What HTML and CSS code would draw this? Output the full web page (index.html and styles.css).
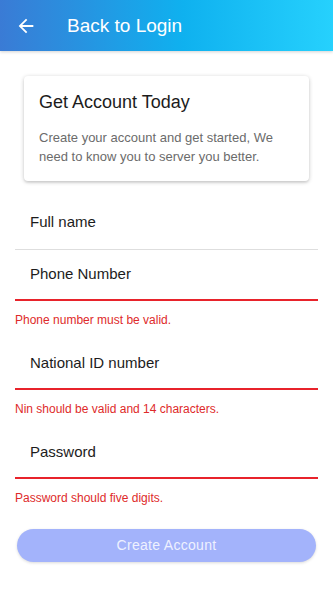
FILE: index.html
```html
<!DOCTYPE html>
<html lang="en">
<head>
<meta charset="utf-8">
<meta name="viewport" content="width=device-width, initial-scale=1">
<title>Back to Login</title>
<link rel="stylesheet" href="styles.css">
</head>
<body>
<header class="appbar">
  <svg class="back" viewBox="0 0 24 24" width="22" height="22" aria-hidden="true">
    <path fill="#fff" d="M20 11H7.83l5.59-5.59L12 4l-8 8 8 8 1.41-1.41L7.83 13H20v-2z"/>
  </svg>
  <span class="appbar-title">Back to Login</span>
</header>
<main class="content">
  <section class="card">
    <h1 class="card-title">Get Account Today</h1>
    <p class="card-text">Create your account and get started, We need to know you to server you better.</p>
  </section>
  <form class="form">
    <div class="field">
      <div class="input">Full name</div>
    </div>
    <div class="field invalid">
      <div class="input">Phone Number</div>
      <div class="error">Phone number must be valid.</div>
    </div>
    <div class="field invalid">
      <div class="input">National ID number</div>
      <div class="error">Nin should be valid and 14 characters.</div>
    </div>
    <div class="field invalid">
      <div class="input">Password</div>
      <div class="error">Password should five digits.</div>
    </div>
  </form>
  <button class="submit" type="button">Create Account</button>
</main>
</body>
</html>
```
FILE: styles.css
```css
* { box-sizing: border-box; }
html, body { margin: 0; padding: 0; background: #fff; }
body {
  font-family: "Liberation Sans", Arial, sans-serif;
  color: #1f1f1f;
  width: 333px;
  min-height: 592px;
}
.appbar {
  height: 51px;
  display: flex;
  align-items: center;
  padding-left: 14.5px;
  background: linear-gradient(90deg, #3a7bd5 0%, #0fb1ef 55%, #26d1fd 100%);
  box-shadow: 0 1px 3px rgba(0,0,0,0.18);
  position: relative;
  z-index: 1;
}
.back { display: block; flex: none; }
.appbar-title {
  margin-left: 30.5px;
  color: #fff;
  font-size: 19px;
  line-height: 24px;
}
.content { padding-top: 25px; }
.card {
  margin: 0 24px;
  padding: 14px 15px 14.5px;
  border-radius: 4px;
  background: #fff;
  box-shadow: 0 1px 4px rgba(0,0,0,0.22), 0 2px 2px rgba(0,0,0,0.06);
}
.card-title {
  margin: 0;
  font-size: 18px;
  line-height: 24px;
  font-weight: normal;
  color: #1c1c1c;
}
.card-text {
  margin: 13.5px 0 0;
  font-size: 13px;
  line-height: 19.5px;
  color: #6b6b6b;
}
.form {
  margin: 16.5px 15px 0;
  display: flex;
  flex-direction: column;
}
.input {
  padding: 15px 15px 18px;
  font-size: 15px;
  line-height: 18px;
  color: #1c1c1c;
  border-bottom: 1px solid #dedede;
}
.field.invalid .input {
  border-bottom: 2px solid #e8232b;
  padding-bottom: 16px;
}
.error {
  margin: 12px 0 12px;
  font-size: 12px;
  line-height: 14px;
  color: #de2a2a;
}
.submit {
  display: block;
  width: 299px;
  height: 33px;
  margin: 12px 17px 0;
  border: 0;
  border-radius: 17px;
  background: #a3b3fb;
  color: #eef1ff;
  font-family: "Liberation Sans", Arial, sans-serif;
  font-size: 14px;
  letter-spacing: 0.3px;
  box-shadow: 0 1px 3px rgba(0,0,0,0.15);
  padding: 0;
}
```
